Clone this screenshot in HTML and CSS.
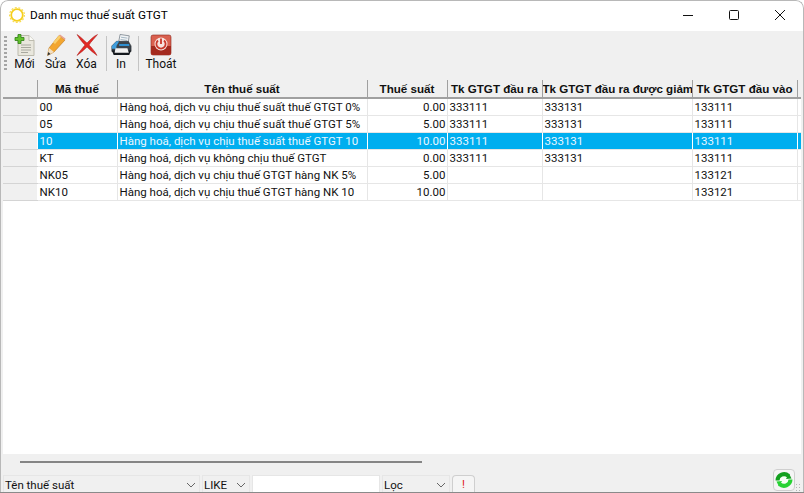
FILE: index.html
```html
<!DOCTYPE html>
<html lang="vi">
<head>
  <meta charset="UTF-8">
  <title>Danh mục thuế suất GTGT</title>
  <link rel="stylesheet" href="styles.css">
</head>
<body>
  <div class="window">

    <div class="titlebar">
      <svg class="app-icon" width="18" height="18" viewBox="0 0 18 18">
        <circle cx="9" cy="9" r="5.800" fill="#fff" stroke="#f5cf1e" stroke-width="1.800"/>
        <circle cx="9" cy="9" r="7.400" fill="none" stroke="#f8dc50" stroke-width="1.200" stroke-dasharray="2 1.600"/>
      </svg>
      <div class="title">Danh mục thuế suất GTGT</div>
      <div class="win-btn">
        <svg width="12" height="12" viewBox="0 0 12 12"><path d="M1 6.500h10" stroke="#111" stroke-width="1"/></svg>
      </div>
      <div class="win-btn">
        <svg width="12" height="12" viewBox="0 0 12 12"><rect x="1.500" y="1.500" width="9" height="9" rx="1" fill="none" stroke="#111"/></svg>
      </div>
      <div class="win-btn">
        <svg width="12" height="12" viewBox="0 0 12 12"><path d="M1 1l10 10M11 1L1 11" stroke="#111" stroke-width="1"/></svg>
      </div>
    </div>

    <div class="toolbar">
      <div class="grip"></div>
      <div class="tool tool-sm">
        <svg width="22" height="22" viewBox="0 0 22 22">
          <path d="M4 1.500h11l5 5v15H4z" fill="#e9e7dd" stroke="#bdbbae"/>
          <path d="M15 1.500v5h5" fill="#fbfbf8" stroke="#bdbbae"/>
          <path d="M7 11h10M7 13.500h10M7 16h10M7 18.500h7" stroke="#a8a89f"/>
          <path d="M4 .500h3v3h3v3H7v3H4v-3H1v-3h3z" fill="#63c22c" stroke="#2f7d14" stroke-width=".8"/>
        </svg>
        <span>Mới</span>
      </div>
      <div class="tool tool-sm">
        <svg width="22" height="22" viewBox="0 0 22 22">
          <path d="M2.500 21.500l1.500-7.500L14 1.500l6 4.500L9 18z" fill="#f3a62f" stroke="#b8761c" stroke-width=".6"/>
          <path d="M14 1.500L15 .5 20.500 4.500 20 6z" fill="#e9a08e"/>
          <path d="M8 8.500l6-7 2 1.500-6 7z" fill="#f9cf6c"/>
          <path d="M2.500 21.500L4 14l5 4z" fill="#f1dfc4"/>
          <path d="M2.500 21.500l.7-3.500 2.400 1.900z" fill="#333"/>
        </svg>
        <span>Sửa</span>
      </div>
      <div class="tool tool-sm">
        <svg width="22" height="22" viewBox="0 0 22 22">
          <path d="M1 .5c4 2.500 7 6 10 8.500 3-3 6-6.500 10.500-8.500-3 4-6.500 7-8.500 10.500 3 3 6 6.500 8 10.500-3.500-2.500-7-5.500-10-8.500-3 3-6.500 6-10 8.500 2.500-4 5.500-7.500 8-10.500C6 8 3.500 4.500 1 .5z" fill="#e22a25" stroke="#a81a18" stroke-width=".5"/>
        </svg>
        <span>Xóa</span>
      </div>
      <div class="sep"></div>
      <div class="tool tool-in">
        <svg width="22" height="24" viewBox="0 0 22 24">
          <path d="M10 .5l10 1.500-1.500 9H8z" fill="#f2f4f6" stroke="#6f7a84" stroke-width=".8"/>
          <path d="M11 3.500l7 1M10.500 6l7 1" stroke="#9fb2c0"/>
          <path d="M1 13l5-5h13l3 5v6H1z" fill="#3c444c" stroke="#1f252a" stroke-width=".6"/>
          <path d="M1 13l5-5h3l-3 5v3H1z" fill="#3f9edd"/>
          <path d="M9 11h11v2H9z" fill="#2f8fd0"/>
          <path d="M1 18h21l-2 5H3z" fill="#15191e"/>
          <path d="M5 15.500h13l1.500 5H4z" fill="#f2f2f2"/>
        </svg>
        <span>In</span>
      </div>
      <div class="sep"></div>
      <div class="tool tool-exit">
        <svg width="22" height="22" viewBox="0 0 22 22">
          <rect x="1" y="1" width="20" height="20" rx="2" fill="#d9604f" stroke="#8d2a20" stroke-width=".6"/>
          <path d="M1 12h20v7a2 2 0 0 1-2 2H3a2 2 0 0 1-2-2z" fill="#a42a1e"/>
          <circle cx="11" cy="10" r="6.500" fill="#f7e3df"/>
          <path d="M8 6.500a4.600 4.600 0 1 0 6 0" fill="none" stroke="#c9382a" stroke-width="1.800"/>
          <path d="M11 4.500v5.500" stroke="#c9382a" stroke-width="1.800"/>
        </svg>
        <span>Thoát</span>
      </div>
    </div>

    <div class="grid-wrap">
      <table class="grid">
        <colgroup>
          <col class="c-row"><col class="c-ma"><col class="c-ten"><col class="c-rate">
          <col class="c-ra"><col class="c-giam"><col class="c-vao"><col class="c-end">
        </colgroup>
        <thead>
          <tr>
            <th class="row-head"></th>
            <th>Mã thuế</th>
            <th>Tên thuế suất</th>
            <th>Thuế suất</th>
            <th>Tk GTGT đầu ra</th>
            <th>Tk GTGT đầu ra được giảm</th>
            <th>Tk GTGT đầu vào</th>
            <th class="end-head"></th>
          </tr>
        </thead>
        <tbody>
          <tr>
            <td class="row-head"></td><td>00</td><td>Hàng hoá, dịch vụ chịu thuế suất thuế GTGT 0%</td>
            <td class="num">0.00</td><td>333111</td><td>333131</td><td>133111</td><td></td>
          </tr>
          <tr>
            <td class="row-head"></td><td>05</td><td>Hàng hoá, dịch vụ chịu thuế suất thuế GTGT 5%</td>
            <td class="num">5.00</td><td>333111</td><td>333131</td><td>133111</td><td></td>
          </tr>
          <tr class="selected">
            <td class="row-head"></td><td>10</td><td>Hàng hoá, dịch vụ chịu thuế suất thuế GTGT 10</td>
            <td class="num">10.00</td><td>333111</td><td>333131</td><td>133111</td><td></td>
          </tr>
          <tr>
            <td class="row-head"></td><td>KT</td><td>Hàng hoá, dịch vụ không chịu thuế GTGT</td>
            <td class="num">0.00</td><td>333111</td><td>333131</td><td>133111</td><td></td>
          </tr>
          <tr>
            <td class="row-head"></td><td>NK05</td><td>Hàng hoá, dịch vụ chịu thuế GTGT hàng NK 5%</td>
            <td class="num">5.00</td><td></td><td></td><td>133121</td><td></td>
          </tr>
          <tr>
            <td class="row-head"></td><td>NK10</td><td>Hàng hoá, dịch vụ chịu thuế GTGT hàng NK 10</td>
            <td class="num">10.00</td><td></td><td></td><td>133121</td><td></td>
          </tr>
        </tbody>
      </table>
    </div>

    <div class="scroll-area">
      <div class="scroll-thumb"></div>
    </div>

    <div class="filter-bar">
      <div class="combo combo-field"><span>Tên thuế suất</span><svg width="10" height="6" viewBox="0 0 10 6"><path d="M1 1l4 4 4-4" fill="none" stroke="#666"/></svg></div>
      <div class="combo combo-op"><span>LIKE</span><svg width="10" height="6" viewBox="0 0 10 6"><path d="M1 1l4 4 4-4" fill="none" stroke="#666"/></svg></div>
      <div class="filter-input"></div>
      <div class="combo combo-loc"><span>Lọc</span><svg width="10" height="6" viewBox="0 0 10 6"><path d="M1 1l4 4 4-4" fill="none" stroke="#666"/></svg></div>
      <div class="bang-btn">!</div>
      <div class="refresh-btn">
        <svg width="18" height="18" viewBox="0 0 18 18">
          <circle cx="9" cy="9" r="7" fill="#f6fff6"/>
          <path d="M2.500 9.500a6.500 6.500 0 0 1 11-4.500" fill="none" stroke="#12a01e" stroke-width="4"/>
          <path d="M15.500 8.500a6.500 6.500 0 0 1-11 4.500" fill="none" stroke="#27d233" stroke-width="4"/>
          <path d="M11 8l5.500-.5L14 2.500z" fill="#12a01e"/>
          <path d="M7 10l-5.500.5L4 15.500z" fill="#27d233"/>
        </svg>
      </div>
    </div>

    <div class="size-grip"></div>
  </div>
</body>
</html>
```

FILE: styles.css
```css
* { box-sizing: border-box; }

html, body {
  margin: 0;
  padding: 0;
  height: 493px;
  overflow: hidden;
}

body {
  background: #fff;
  font-family: 'Roboto', 'Liberation Sans', sans-serif;
  font-size: 11.5px;
  color: #111;
}

.window {
  position: relative;
  width: 804px;
  height: 493px;
  background: #f0f0f0;
  border-radius: 8px 8px 0 0;
  border-bottom: 1px solid #8a8a8a;
  display: flex;
  flex-direction: column;
  overflow: hidden;
}

/* thin frame of the window, drawn over its content */
.window::after {
  content: '';
  position: absolute;
  top: 0;
  left: 0;
  right: 0;
  bottom: 0;
  border: 1px solid #b8b8b8;
  border-bottom: none;
  border-radius: 8px 8px 0 0;
  pointer-events: none;
}

.titlebar {
  height: 31px;
  background: #fff;
  display: flex;
  align-items: center;
  padding: 0 1px 2px 8px;
  flex-shrink: 0;
}

.app-icon {
  margin-right: 4px;
}

.title {
  flex: 1;
  font-family: 'Roboto', sans-serif;
  font-size: 11.8px;
  color: #000;
}

.win-btn {
  width: 46px;
  display: flex;
  align-items: center;
  justify-content: center;
}

.toolbar {
  height: 44px;
  display: flex;
  align-items: stretch;
  padding: 3px 0 0 4px;
  flex-shrink: 0;
}

.grip {
  width: 3px;
  margin: 2px 2px 4px 0;
  background: repeating-linear-gradient(to bottom, #a5a5a5 0 2px, transparent 2px 4px);
}

.tool {
  display: flex;
  flex-direction: column;
  align-items: center;
  justify-content: flex-end;
  height: 38px;
  font-family: 'Roboto', sans-serif;
  font-size: 12px;
  line-height: 16px;
}

.tool svg {
  display: block;
}

.tool-sm { width: 31px; }
.tool-in { width: 26px; }
.tool-exit { width: 42px; }

.sep {
  width: 1px;
  margin: 2px 1px 4px 4px;
  background: #c4c4c4;
}

.grid-wrap {
  flex: 1;
  margin: 5px 3px 0;
  background: #fff;
  overflow: hidden;
}

.grid {
  border-collapse: collapse;
  table-layout: fixed;
  width: 798px;
}

.c-row { width: 34px; }
.c-ma { width: 80px; }
.c-ten { width: 250px; }
.c-rate { width: 80px; }
.c-ra { width: 95px; }
.c-giam { width: 150px; }
.c-vao { width: 105px; }
.c-end { width: 4px; }

.grid th {
  height: 18px;
  padding: 0;
  background: #f0f0f0;
  font-family: 'Liberation Sans', sans-serif;
  font-size: 11.6px;
  font-weight: bold;
  text-align: center;
  white-space: nowrap;
  overflow: hidden;
  border-right: 1px solid #a0a0a0;
  border-bottom: 2px solid #a0a0a0;
}

.grid th.end-head {
  border-right: none;
}

.grid td {
  height: 17px;
  padding: 1px 2px 0;
  white-space: nowrap;
  overflow: hidden;
  border-right: 1px solid #e6e6e6;
  border-bottom: 1px solid #e6e6e6;
}

.grid td.num {
  text-align: right;
  padding-right: 1px;
}

.grid td.row-head {
  background: #f0f0f0;
  border-right: 1px solid #fff;
  border-bottom: 1px solid #d4d4d4;
}

.grid .selected td {
  background: #00aeef;
  color: #eaf7ff;
  border-right-color: #fff;
}

.grid .selected td.row-head {
  background: #f0f0f0;
}

.scroll-area {
  height: 21px;
  flex-shrink: 0;
  padding: 7px 0 0 20px;
}

.scroll-thumb {
  width: 402px;
  height: 2px;
  background: #858585;
}

.filter-bar {
  height: 17px;
  display: flex;
  gap: 2px;
  padding-left: 3px;
  flex-shrink: 0;
}

.combo {
  display: flex;
  align-items: center;
  justify-content: space-between;
  padding: 1px 3px 0 1px;
  background: #f0f0f0;
  border: 1px solid #e6e6e6;
  border-bottom: none;
}

.combo-field { width: 197px; }
.combo-op { width: 48px; }
.combo-loc { width: 68px; }

.filter-input {
  width: 128px;
  background: #fff;
  border: 1px solid #e6e6e6;
  border-bottom: none;
}

.bang-btn {
  width: 23px;
  background: #f5f5f5;
  border: 1px solid #cfcfcf;
  border-bottom: none;
  border-radius: 4px 4px 0 0;
  color: #e02020;
  text-align: center;
  line-height: 17px;
}

.refresh-btn {
  width: 22px;
  height: 22px;
  margin: -6px 9px 0 auto;
  background: #f5f5f5;
  border: 1px solid #cfcfcf;
  border-radius: 4px;
  display: flex;
  align-items: center;
  justify-content: center;
}

.size-grip {
  position: absolute;
  right: 3px;
  bottom: 1px;
  width: 6px;
  height: 8px;
  background: radial-gradient(circle, #b5b5b5 1px, transparent 1px) 0 0 / 3px 3px;
}
```
